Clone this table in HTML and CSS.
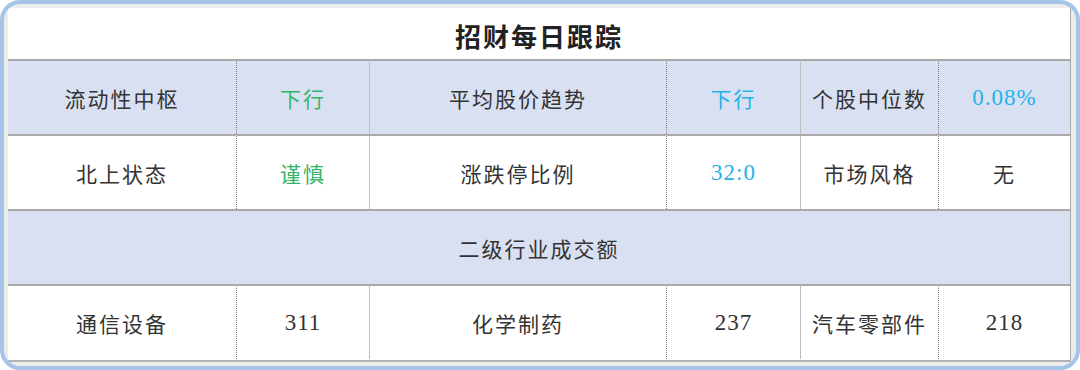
FILE: index.html
```html
<!DOCTYPE html>
<html lang="zh">
<head>
<meta charset="utf-8">
<link rel="stylesheet" href="styles.css">
</head>
<body>
<div class="frame">
  <div class="sheet">
    <div class="title">招财每日跟踪</div>

    <div class="cell hd">流动性中枢</div>
    <div class="cell hd dot green">下行</div>
    <div class="cell hd solid">平均股价趋势</div>
    <div class="cell hd dot blue">下行</div>
    <div class="cell hd solid">个股中位数</div>
    <div class="cell hd dot blue num">0.08%</div>

    <div class="cell">北上状态</div>
    <div class="cell dot green">谨慎</div>
    <div class="cell solid">涨跌停比例</div>
    <div class="cell dot blue num">32:0</div>
    <div class="cell solid">市场风格</div>
    <div class="cell dot">无</div>

    <div class="cell hd span">二级行业成交额</div>

    <div class="cell">通信设备</div>
    <div class="cell dot num">311</div>
    <div class="cell solid">化学制药</div>
    <div class="cell dot num">237</div>
    <div class="cell solid">汽车零部件</div>
    <div class="cell dot num">218</div>
  </div>
</div>
</body>
</html>
```

FILE: styles.css
```css
html, body {
  margin: 0;
  padding: 0;
  background: #ffffff;
}

.frame {
  box-sizing: border-box;
  width: 1080px;
  height: 370px;
  border: 4px solid #a5c5e8;
  border-radius: 20px;
  background: #ececec;
  padding: 4px 5px 4px 4px;
  overflow: hidden;
}

.sheet {
  display: grid;
  grid-template-columns: 228px 133px 297px 134px 138px 1fr;
  grid-template-rows: 51px 75px 75px 75px 75px;
  background: #ffffff;
  border-right: 1px solid #a9a9a9;
  border-bottom: 2px solid #b4b4b4;
  height: 100%;
  box-sizing: border-box;
  font-family: "Liberation Serif", "Noto Sans CJK SC", serif;
  color: #333333;
}

.title {
  grid-column: 1 / -1;
  display: flex;
  align-items: center;
  justify-content: center;
  font-family: "Noto Sans CJK SC", sans-serif;
  font-weight: 700;
  font-size: 26px;
  letter-spacing: 2px;
  color: #222222;
  padding-top: 4px;
}

.cell {
  display: flex;
  align-items: center;
  justify-content: center;
  border-top: 2px solid #a9a9a9;
  font-size: 21px;
  letter-spacing: 2px;
  padding-top: 1px;
  box-sizing: border-box;
}

.hd {
  background: #d9e0f1;
}

.span {
  grid-column: 1 / -1;
}

.dot {
  border-left: 1px dotted #7a7a7a;
}

.solid {
  border-left: 1px solid #bdbdbd;
}

.green {
  color: #33b56b;
}

.blue {
  color: #25b2ea;
}

.num {
  font-size: 23px;
  letter-spacing: 1px;
}
```
